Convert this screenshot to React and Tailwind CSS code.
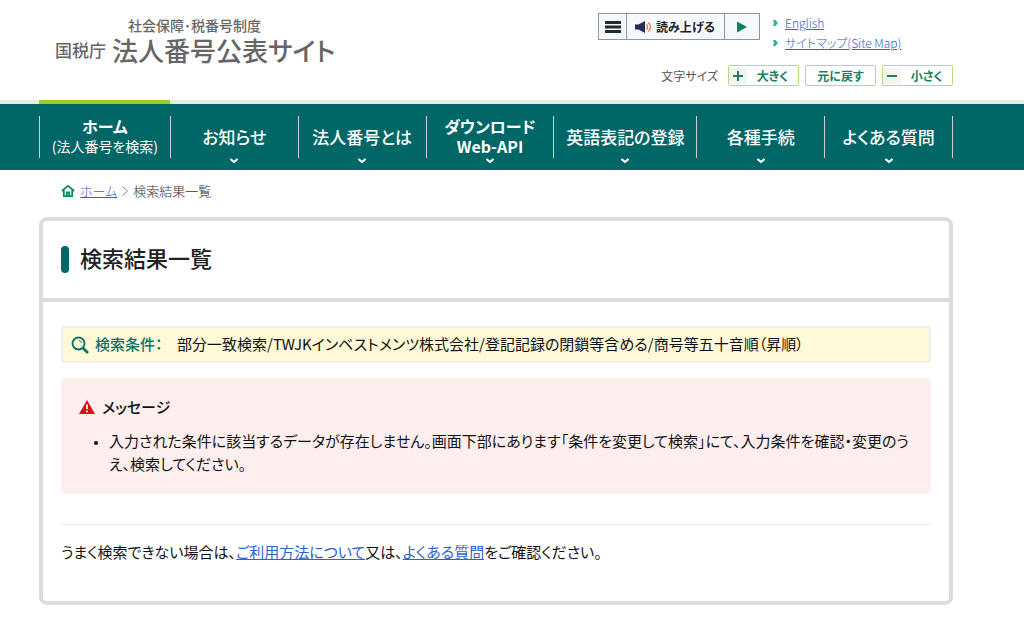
const NAV_ITEMS = [
    { lines: ['お知らせ'] },
    { lines: ['法人番号とは'] },
    { lines: ['ダウンロード', 'Web-API'] },
    { lines: ['英語表記の登録'] },
    { lines: ['各種手続'] },
    { lines: ['よくある質問'] },
]

function Logo() {
    return (
        <a href="#" className="block pl-4 pt-[15px] text-[#666]">
            <span className="block pl-[73px] text-[14px] leading-5 font-medium">社会保障･税番号制度</span>
            <span className="flex items-center gap-1.5 leading-[30px] font-medium">
                <span className="text-[17px]">国税庁</span>
                <span className="text-[26px]">法人番号公表サイト</span>
            </span>
        </a>
    )
}

function ReadAloud() {
    return (
        <div className="flex h-[27px] divide-x divide-[#8d999e] border border-[#8d999e] bg-[#f5f9fd]">
            <button type="button" aria-label="メニュー" className="flex w-[28px] items-center justify-center">
                <svg className="h-3 w-4" viewBox="0 0 16 12" fill="#222c30">
                    <path d="M0 0h16v3H0zM0 4.5h16v3H0zM0 9h16v3H0z" />
                </svg>
            </button>
            <button type="button" className="flex w-[98px] items-center gap-1 pl-2 text-[12px] font-bold text-[#222]">
                <svg className="h-4 w-[17px] shrink-0" viewBox="0 0 17 16">
                    <path d="M0 5.500h3.500L10 2v12l-6.500-3.500H0z" fill="#26295c" />
                    <path d="M11.5 5q2 3 0 6M13.5 3.500q4 4.500 0 9" fill="none" stroke="#e8703a" strokeWidth="1.2" />
                </svg>
                読み上げる
            </button>
            <button type="button" aria-label="再生" className="flex w-[34px] items-center justify-center">
                <svg className="h-3 w-3" viewBox="0 0 12 12" fill="#0b8457">
                    <path d="M1 0.500L11 6L1 11.500z" />
                </svg>
            </button>
        </div>
    )
}

function HeaderLink({ children }) {
    return (
        <li className="flex items-center gap-1.5">
            <svg className="h-1.5 w-[7px]" viewBox="0 0 7 6" fill="#2bb5a0">
                <path d="M1 0h2.500L6 3L3.500 6H1L2 3z" />
            </svg>
            <a href="#" className="font-light text-[#2f62d0] underline">{children}</a>
        </li>
    )
}

function SizeButton({ sign, children }) {
    return (
        <button
            type="button"
            className="flex h-[21px] w-[71px] items-center rounded-xs border border-[#b5dc7c] bg-white text-[12px] font-bold text-[#16805f]"
        >
            {sign && (
                <span className="flex h-4 w-[18px] items-center justify-center bg-[#f4f4ee]">
                    <svg className="h-2.5 w-2.5" viewBox="0 0 10 10" stroke="#16805f" strokeWidth="2">
                        <path d={sign === 'plus' ? 'M0 5h10M5 0v10' : 'M0 5h10'} />
                    </svg>
                </span>
            )}
            <span className="flex-1 text-center">{children}</span>
        </button>
    )
}

function Chevron() {
    return (
        <svg
            className="absolute inset-x-0 -bottom-1.5 mx-auto h-1.5 w-2"
            viewBox="0 0 8 6"
            fill="none"
            stroke="white"
            strokeWidth="2"
        >
            <path d="M0.500 1L4 4L7.500 1" />
        </svg>
    )
}

function GlobalNav() {
    return (
        <nav>
            {/* 現在のページを示す緑のライン */}
            <div className="bg-[#ebeae2] pl-[39px] pr-[71px]">
                <div className="grid grid-cols-[131fr_783fr]">
                    <div className="h-1 bg-[#9acd2b]" />
                </div>
            </div>
            <div className="bg-[#006666] py-3 pl-[39px] pr-[71px]">
                <ul className="grid h-[42px] grid-cols-[131fr_128fr_128fr_128fr_143fr_128fr_128fr] border-r border-[#c9d3cc] text-white">
                    <li className="border-l border-[#c9d3cc]">
                        <a href="#" className="flex h-full flex-col items-center justify-center pb-0.5 leading-5">
                            <span className="text-[16px] font-bold">ホーム</span>
                            <span className="text-[14px]">(法人番号を検索)</span>
                        </a>
                    </li>
                    {NAV_ITEMS.map((item) => (
                        <li key={item.lines[0]} className="relative border-l border-[#c9d3cc]">
                            <a
                                href="#"
                                className={
                                    item.lines.length > 1
                                        ? 'flex h-full flex-col items-center justify-center pb-0.5 text-[16px] leading-5 font-bold'
                                        : 'flex h-full flex-col items-center justify-center text-[17px] leading-5 font-medium'
                                }
                            >
                                {item.lines.map((line) => (
                                    <span key={line}>{line}</span>
                                ))}
                            </a>
                            <Chevron />
                        </li>
                    ))}
                </ul>
            </div>
        </nav>
    )
}

function Breadcrumb() {
    return (
        <div className="flex items-center gap-[5px] px-[61px] pt-[11px] text-[13px] leading-5 font-light text-[#333]">
            <svg className="h-3.5 w-3.5" viewBox="0 0 14 14" fill="none" stroke="#0b8f62" strokeWidth="1.800">
                <path d="M0.800 7L7 1.800L13.200 7" />
                <path d="M2.800 6v6.200h8.400V6" />
                <path d="M5.800 12V8.500h2.400V12" />
            </svg>
            <a href="#" className="text-[#2f62d0] underline">ホーム</a>
            <svg className="h-2.5 w-1.5" viewBox="0 0 6 10" fill="none" stroke="#888">
                <path d="M0.500 0.500L5.500 5L0.500 9.500" />
            </svg>
            <span>検索結果一覧</span>
        </div>
    )
}

export default function App() {
    return (
        <div className="bg-white font-['Noto_Sans_CJK_JP',sans-serif] text-[#111] [font-feature-settings:'palt']">
            <header className="flex h-[100px] justify-between pl-[39px] pr-[71px]">
                <Logo />
                <div className="flex w-[355px] flex-col gap-3 pt-[13px]">
                    <div className="flex gap-3">
                        <ReadAloud />
                        <ul className="text-[12px] leading-5">
                            <HeaderLink>English</HeaderLink>
                            <HeaderLink>サイトマップ(Site Map)</HeaderLink>
                        </ul>
                    </div>
                    <div className="flex items-center justify-end gap-1.5">
                        <span className="pr-1 text-[12px] text-[#555]">文字サイズ</span>
                        <SizeButton sign="plus">大きく</SizeButton>
                        <SizeButton>元に戻す</SizeButton>
                        <SizeButton sign="minus">小さく</SizeButton>
                    </div>
                </div>
            </header>

            <GlobalNav />
            <Breadcrumb />

            <main className="mt-4 mb-9 ml-[39px] mr-[71px] rounded-lg border-4 border-[#dcdcdc]">
                <div className="flex h-[81px] items-center gap-[11px] border-b-4 border-[#dcdcdc] px-[18px]">
                    <span className="h-[27px] w-2 rounded-full bg-[#006666]" />
                    <h1 className="pb-1 text-[22px] font-medium text-[#222]">検索結果一覧</h1>
                </div>

                <div className="px-[18px] pt-6 pb-[37px]">
                    <div className="flex h-[37px] items-center rounded-xs border-2 border-[#efefec] bg-[#fff9d7] px-2 text-[15px]">
                        <svg className="h-[18px] w-[18px]" viewBox="0 0 18 18" fill="none" stroke="#0b7266">
                            <circle cx="7.500" cy="7.500" r="6" strokeWidth="1.800" />
                            <path d="M12 12l5 5" strokeWidth="2.600" />
                            <path d="M8 4.500q2 0.500 2.500 2.500" strokeWidth="1" />
                        </svg>
                        <span className="w-[88px] pl-1.5 font-medium text-[#0b7266]">検索条件：</span>
                        <span>部分一致検索/TWJKインベストメンツ株式会社/登記記録の閉鎖等含める/商号等五十音順（昇順）</span>
                    </div>

                    <section className="mt-[15px] rounded-sm bg-[#ffeeee] px-[18px] py-[19px] text-[15px]">
                        <h2 className="flex items-center gap-[7px] leading-5 font-medium">
                            <svg className="h-4 w-4" viewBox="0 0 16 16">
                                <path d="M8 1L16 15H0z" fill="#d01414" />
                                <path d="M8 5.500v4.500M8 11.500v1.800" stroke="white" strokeWidth="1.800" />
                            </svg>
                            メッセージ
                        </h2>
                        <ul className="mt-3 list-disc pl-[30px] leading-[23px] marker:text-[11px]">
                            <li>
                                入力された条件に該当するデータが存在しません。画面下部にあります「条件を変更して検索」にて、入力条件を確認・変更のうえ、検索してください。
                            </li>
                        </ul>
                    </section>

                    <hr className="mt-[30px] border-[#eee]" />
                    <p className="mt-[15px] text-[15px] leading-6">
                        うまく検索できない場合は、
                        <a href="#" className="text-[#2f62d0] underline">ご利用方法について</a>
                        又は、
                        <a href="#" className="text-[#2f62d0] underline">よくある質問</a>
                        をご確認ください。
                    </p>
                </div>
            </main>
        </div>
    )
}
